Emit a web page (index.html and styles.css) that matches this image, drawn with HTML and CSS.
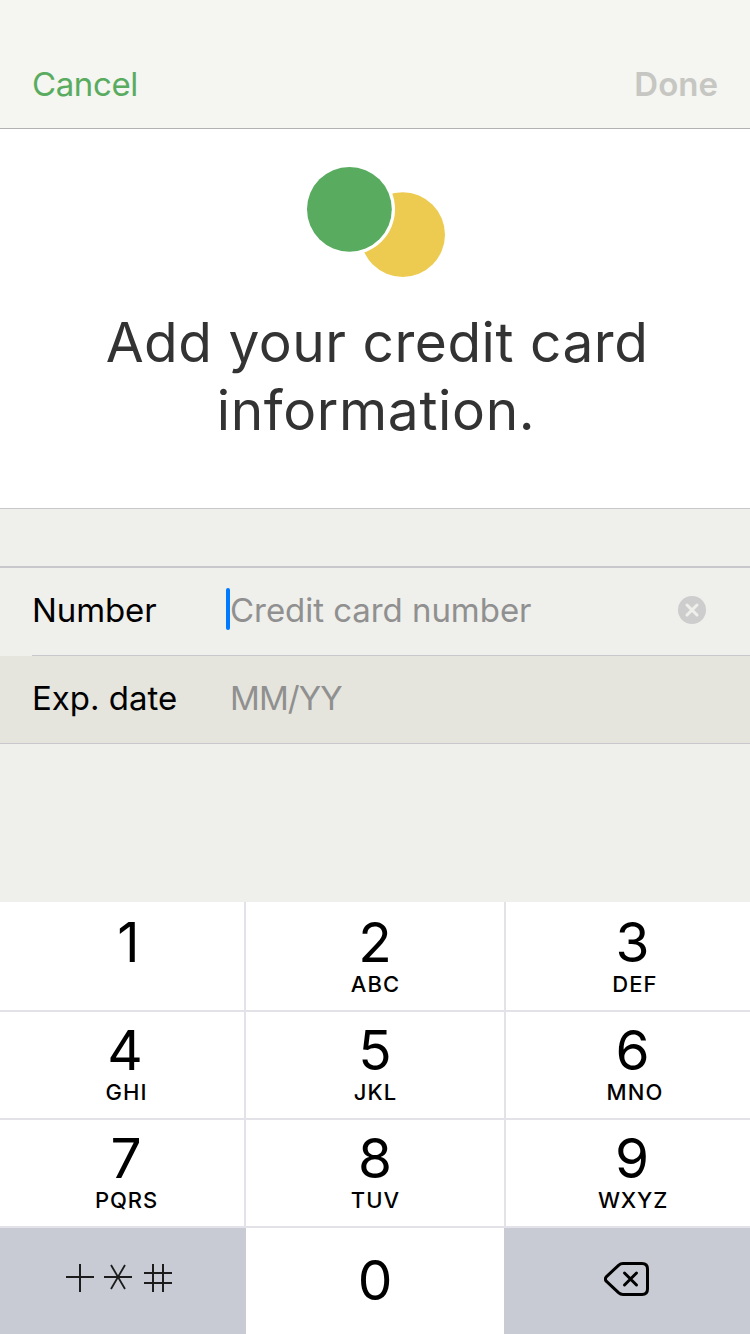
FILE: index.html
```html
<!DOCTYPE html>
<html lang="en">
<head>
<meta charset="utf-8">
<title>Add credit card</title>
<link rel="stylesheet" href="styles.css">
</head>
<body>
<div class="screen">
  <header class="nav">
    <span class="cancel">Cancel</span>
    <span class="done">Done</span>
  </header>
  <section class="hero">
    <svg class="logo" width="140" height="112" viewBox="306 166 140 112">
      <circle cx="402.7" cy="234.6" r="42.3" fill="#edcb51"/>
      <circle cx="349.4" cy="209.3" r="45.6" fill="#fff"/>
      <circle cx="349.4" cy="209.3" r="42.4" fill="#59ac5f"/>
    </svg>
    <h1 class="title"><span class="line1">Add your credit card</span><br><span class="line2">information.</span></h1>
  </section>
  <main class="form">
    <div class="row">
      <span class="label number">Number</span>
      <span class="caret"></span>
      <span class="placeholder card">Credit card number</span>
      <svg class="clear" width="28" height="28" viewBox="0 0 28 28">
        <circle cx="14" cy="14" r="14" fill="#cdcdcd"/>
        <path d="M9 9l10 10M19 9L9 19" stroke="#efefeb" stroke-width="3" stroke-linecap="round"/>
      </svg>
    </div>
    <div class="row tinted">
      <span class="label exp">Exp. date</span>
      <span class="placeholder mmyy">MM/YY</span>
    </div>
  </main>
  <div class="keypad">
    <div class="key left one"><b class="digit">1</b></div>
    <div class="key"><b class="digit">2</b><span class="letters">ABC</span></div>
    <div class="key right"><b class="digit">3</b><span class="letters">DEF</span></div>
    <div class="key left"><b class="digit">4</b><span class="letters">GHI</span></div>
    <div class="key"><b class="digit">5</b><span class="letters">JKL</span></div>
    <div class="key right"><b class="digit">6</b><span class="letters">MNO</span></div>
    <div class="key left seven"><b class="digit">7</b><span class="letters">PQRS</span></div>
    <div class="key"><b class="digit">8</b><span class="letters">TUV</span></div>
    <div class="key right nine"><b class="digit">9</b><span class="letters">WXYZ</span></div>
    <div class="key util symbols">
      <svg width="108" height="30" viewBox="65 1263 108 30" fill="none" stroke="#1c1c1c" stroke-width="2">
        <path d="M66 1277H94M80 1264V1292M104 1277H132M144 1273H172M144 1283H172M153 1264V1292M163 1264V1292"/>
        <path d="M111 1265L125 1289M125 1265L111 1289" stroke-width="1.8"/>
      </svg>
    </div>
    <div class="key zero"><b class="digit">0</b></div>
    <div class="key util erase">
      <svg width="46" height="36" viewBox="604 1261 46 36" fill="none" stroke="#000" stroke-width="3" stroke-linecap="round" stroke-linejoin="round">
        <path d="M623 1263.5H642Q647.5 1263.5 647.5 1269V1289Q647.5 1294.5 642 1294.5H623Q620.500 1294.500 618.500 1292.700L606.500 1281.400Q604.300 1279 606.500 1276.600L618.500 1265.300Q620.500 1263.500 623 1263.500Z"/>
        <path d="M624.500 1273L636.500 1285M636.500 1273L624.500 1285"/>
      </svg>
    </div>
  </div>
</div>
</body>
</html>
```
FILE: styles.css
```css
* { box-sizing: border-box; }
body { margin: 0; font-family: Inter, "Liberation Sans", sans-serif; }
.screen { width: 750px; height: 1334px; display: flex; flex-direction: column; background: #efefeb; overflow: hidden; }
.nav { height: 129px; padding: 40px 32px 0; display: flex; justify-content: space-between; background: #f5f5f1; border-bottom: 1px solid #b2b2b2; font-size: 33px; line-height: 88px; }
.cancel { color: #59ac5f; letter-spacing: -0.4px; }
.done { color: #c6c6c2; font-weight: 600; }
.hero { height: 380px; padding: 37px 0 0 2px; display: flex; flex-direction: column; align-items: center; background: #fff; border-bottom: 1px solid #c8c7cc; }
.logo { display: block; }
.title { margin: 30px 0 0 2px; font-size: 55px; line-height: 68px; font-weight: 400; color: #333; text-align: center; white-space: nowrap; }
.line1 { letter-spacing: 0.52px; }
.line2 { letter-spacing: 0.65px; margin-right: 2px; }
.form { height: 393px; padding-top: 57px; }
.row { display: flex; height: 90px; padding-left: 32px; border-top: 2px solid #c8c7cc; font-size: 33px; line-height: 84px; white-space: nowrap; background: linear-gradient(#c8c7cc, #c8c7cc) 32px 100% / 718px 1px no-repeat; }
.row.tinted { height: 88px; border-top: 0; background: #e5e5dd; border-bottom: 1px solid #c8c7cc; }
.label { width: 194px; color: #000; }
.number { letter-spacing: -0.1px; }
.label.exp { width: 198px; }
.caret { width: 4px; height: 42px; margin-top: 20px; border-radius: 2px; background: #007aff; }
.placeholder { color: #909090; }
.card { width: 448px; letter-spacing: -0.05px; }
.mmyy { letter-spacing: -0.9px; }
.clear { margin-top: 28px; }
.keypad { display: grid; grid-template-columns: 246px 258px 246px; grid-template-rows: 110px 108px 108px 106px; }
.key { display: flex; flex-direction: column; align-items: center; padding-top: 8px; background: #fff; border-bottom: 2px solid #e2e2e8; }
.key:nth-child(-n+3) { padding-top: 10px; }
.left { border-right: 2px solid #e2e2e8; padding-left: 6px; }
.right { border-left: 2px solid #e2e2e8; padding-left: 9px; }
.one { padding-left: 13px; }
.digit { font-size: 55px; line-height: 60px; font-weight: 400; }
.seven .digit { padding-left: 2px; }
.nine .digit { padding-right: 1px; }
.letters { font-size: 22px; line-height: 24px; font-weight: 500; letter-spacing: 1.1px; padding-left: 1px; }
.left .letters { padding-left: 3px; }
.right .letters { padding-left: 5px; }
.seven .letters { letter-spacing: 0.9px; }
.nine .letters { letter-spacing: 0.8px; padding-left: 1px; }
.zero, .util { border: 0; }
.zero { padding-top: 22px; }
.util { background: #c8cbd4; }
.symbols { align-items: flex-start; padding: 35px 0 0 65px; }
.erase { align-items: flex-start; padding: 33px 0 0 100px; }
```
